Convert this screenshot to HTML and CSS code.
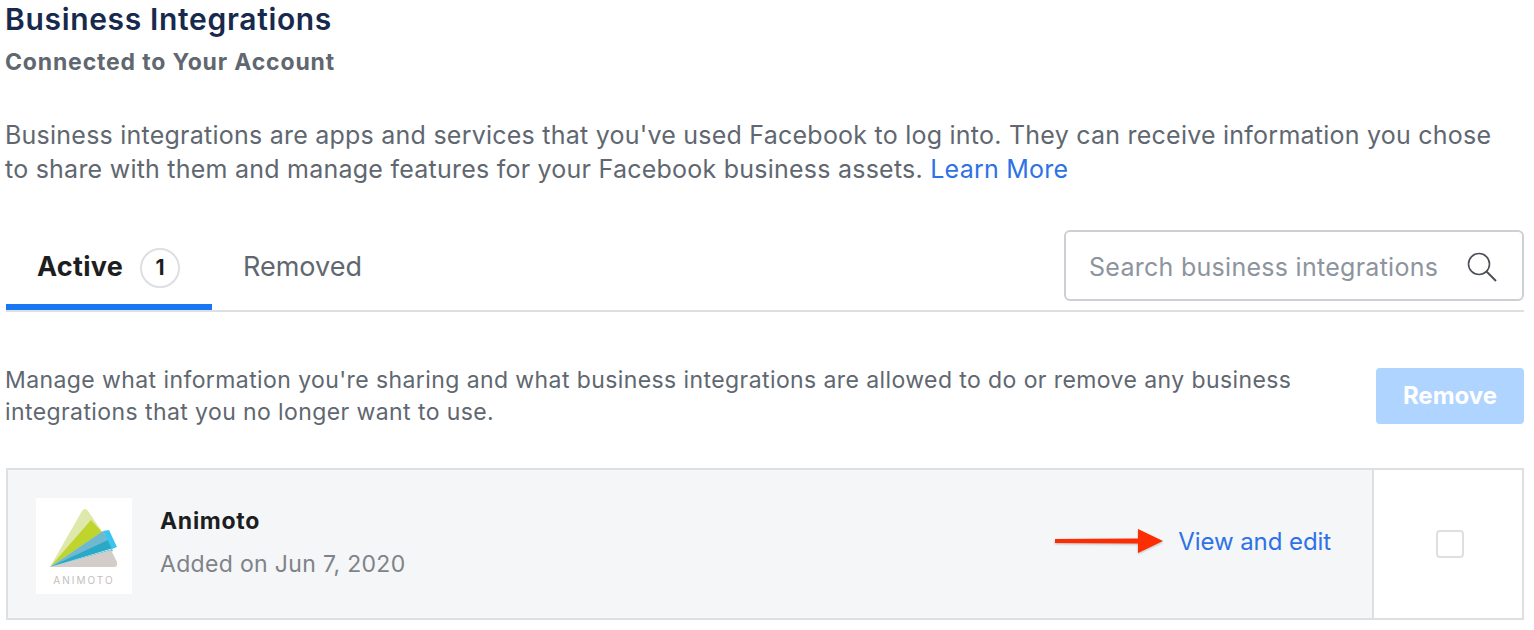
FILE: index.html
```html
<!DOCTYPE html>
<html>
<head>
  <meta charset="UTF-8">
  <title>Business Integrations</title>
  <link rel="stylesheet" href="styles.css">
</head>
<body>

  <header class="page-head">
    <h2>Business Integrations</h2>
    <h3>Connected to Your Account</h3>
  </header>

  <p class="intro">Business integrations are apps and services that you've used Facebook to log into. They can receive information you chose to share with them and manage features for your Facebook business assets. <a href="#">Learn More</a></p>

  <div class="tabs">
    <div class="tab tab-active">Active <span class="count">1</span></div>
    <div class="tab tab-plain">Removed</div>
    <div class="search">
      <span class="search-text">Search business integrations</span>
      <svg width="32" height="32" viewBox="0 0 32 32" fill="none" stroke="#4b4f56">
        <circle cx="13" cy="13" r="10.500" stroke-width="1.6"/>
        <path d="M20.500 20.500l9.500 9.500" stroke-width="2"/>
      </svg>
    </div>
  </div>

  <div class="manage">
    <p>Manage what information you're sharing and what business integrations are allowed to do or remove any business integrations that you no longer want to use.</p>
    <button type="button">Remove</button>
  </div>

  <div class="row">
    <div class="row-main">
      <svg class="logo" width="96" height="96" viewBox="0 0 96 96">
        <rect width="96" height="96" fill="#fff"/>
        <path d="M14 69L46 13q3-4 6 0l13 19z" fill="#dfe8ab"/>
        <path d="M14 69L55 22l11 12z" fill="#bfd42c"/>
        <path d="M14 69L67 33l10 17z" fill="#6fb8cf"/>
        <path d="M14 69L72 42l5 8z" fill="#2aa9c6"/>
        <path d="M14 69L76 51l1 2z" fill="#3cc3ee"/>
        <path d="M67 33l6-1 8 17-5 2z" fill="#3cc3ee"/>
        <path d="M14 69L75 52l6 12q1 5-3 5z" fill="#d3cdc9"/>
        <text class="logo-name" x="48" y="86" text-anchor="middle">ANIMOTO</text>
      </svg>
      <div class="row-info">
        <div class="row-name">Animoto</div>
        <div class="row-date">Added on Jun 7, 2020</div>
      </div>
      <svg class="arrow" width="108" height="28" viewBox="0 0 108 28">
        <path d="M0 11l83-.500V1l25 12-25 12v-9.500L0 15z" fill="#fc2c03"/>
      </svg>
      <a class="row-link" href="#">View and edit</a>
    </div>
    <div class="row-check"><span class="checkbox"></span></div>
  </div>

</body>
</html>
```

FILE: styles.css
```css
body {
  margin: 0;
  padding: 0 10px 0 6px;
  background: #fff;
  font-family: Inter, "Liberation Sans", sans-serif;
  color: #606770;
}

/* Page heading */
.page-head {
  margin-left: -1px;
}

.page-head h2 {
  margin: 0;
  padding-top: 1px;
  font-size: 30px;
  line-height: 36px;
  font-weight: 600;
  letter-spacing: 0.67px;
  color: #172a4d;
}

.page-head h3 {
  margin: 0;
  padding-top: 7px;
  font-size: 23px;
  line-height: 36px;
  font-weight: 700;
  letter-spacing: 0.84px;
  color: #606770;
}

.intro {
  margin: 0 0 0 -1px;
  padding: 38px 16px 0 0;
  font-size: 25px;
  line-height: 34px;
  letter-spacing: 0.235px;
}

.intro a, .row-link {
  color: #2d72e6;
  text-decoration: none;
}

/* Tabs */
.tabs {
  display: flex;
  align-items: flex-start;
  margin-top: 45px;
  height: 79px;
  border-bottom: 2px solid #dddfe2;
}

.tab {
  display: flex;
  align-items: center;
  box-sizing: border-box;
  height: 79px;
  font-size: 27px;
}

.tab-active {
  width: 206px;
  padding: 0 0 2px 31px;
  border-bottom: 6px solid #1877f2;
  font-weight: 700;
  letter-spacing: 0.3px;
  color: #1c1e21;
}

.count {
  display: inline-flex;
  align-items: center;
  justify-content: center;
  width: 36px;
  height: 36px;
  margin: 2px 0 0 17px;
  border: 2px solid #dddfe2;
  border-radius: 50%;
  font-size: 21px;
}

.tab-plain {
  margin-left: 31px;
  padding-bottom: 8px;
}

.search {
  display: flex;
  align-items: center;
  justify-content: space-between;
  box-sizing: border-box;
  width: 460px;
  height: 71px;
  margin: -1px 0 0 auto;
  padding: 2px 24px 0 23px;
  border: 2px solid #ccd0d5;
  border-radius: 6px;
  font-size: 25px;
  letter-spacing: 0.28px;
  color: #8d949e;
}

/* Manage text and button */
.manage {
  display: flex;
  align-items: flex-start;
  justify-content: space-between;
  height: 56px;
  padding-top: 56px;
}

.manage p {
  margin: -4px 0 0 -1px;
  width: 1310px;
  font-size: 23px;
  line-height: 32px;
  letter-spacing: 0.41px;
}

.manage button {
  width: 148px;
  height: 56px;
  padding: 0 0 2px;
  border: none;
  border-radius: 4px;
  background: #afd4ff;
  color: #fff;
  font-family: Inter, "Liberation Sans", sans-serif;
  font-size: 24px;
  font-weight: 700;
}

/* Integration row */
.row {
  display: flex;
  margin-top: 44px;
  height: 152px;
  box-sizing: border-box;
  border: 2px solid #dddfe2;
}

.row-main {
  flex: 1;
  display: flex;
  align-items: center;
  padding: 0 41px 0 28px;
  background: #f5f6f7;
}

.logo {
  margin-top: 4px;
}

.logo-name {
  font-size: 10px;
  letter-spacing: 2px;
  fill: #c4c0bd;
}

.row-info {
  margin: -4px 0 0 28px;
}

.row-name {
  font-size: 23px;
  font-weight: 700;
  letter-spacing: 0.7px;
  color: #1c1e21;
}

.row-date {
  margin-top: 15px;
  font-size: 23px;
  letter-spacing: 0.33px;
  color: #7f8389;
}

.arrow {
  margin: -4px 15px 0 auto;
  filter: drop-shadow(0 1px 1px rgba(0,0,0,0.25));
}

.row-link {
  font-size: 24px;
  letter-spacing: -0.08px;
  margin-top: -6px;
}

.row-check {
  display: flex;
  align-items: center;
  justify-content: center;
  width: 150px;
  padding-left: 4px;
  box-sizing: border-box;
  border-left: 2px solid #dddfe2;
}

.checkbox {
  display: block;
  box-sizing: border-box;
  width: 28px;
  height: 28px;
  border: 2px solid #dddfe2;
  border-radius: 4px;
}
```
